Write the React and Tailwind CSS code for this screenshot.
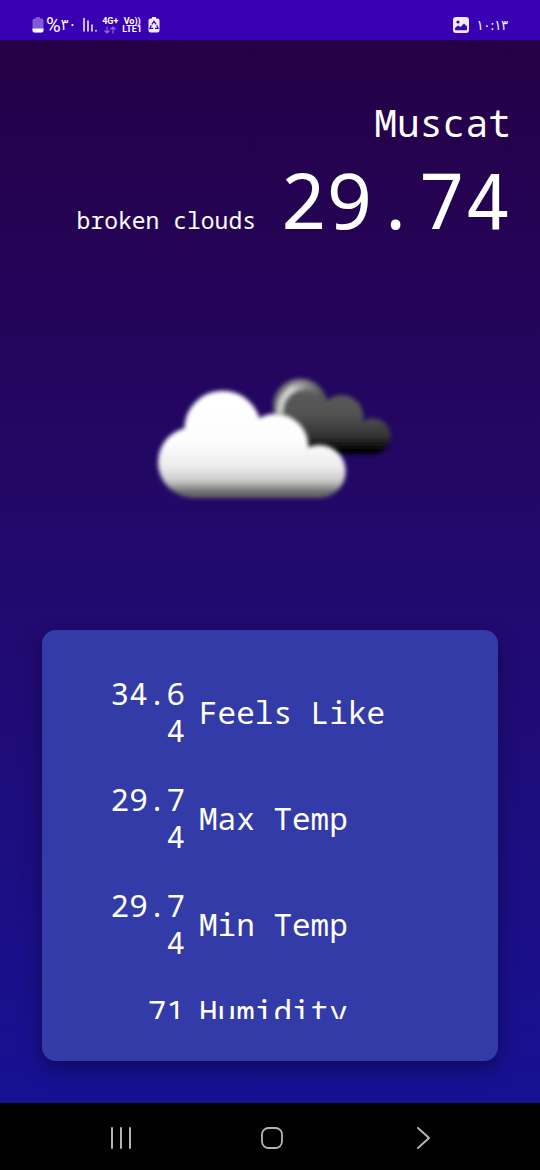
const readings = [
  { label: 'Feels Like', value: '34.64' },
  { label: 'Max Temp', value: '29.74' },
  { label: 'Min Temp', value: '29.74' },
  { label: 'Humidity', value: '71' },
];

function BatteryIcon() {
  return (
    <svg viewBox="0 0 12 18" className="h-[18px] w-3" aria-hidden="true">
      <path d="M4 1h4v1.5h1.5Q11.500 2.500 11.500 4.500V14.500Q11.500 16.500 9.500 16.500h-7Q.5 16.500 .5 14.500V4.500Q.5 2.500 2.500 2.500H4z" fill="#8059d3" />
      <path d="M.5 12.500h11v2q0 2-2 2h-7q-2 0-2-2z" fill="#fff" />
    </svg>
  );
}

function SignalIcon() {
  return (
    <svg viewBox="0 0 16 16" className="h-4 w-4" fill="none" stroke="#eee6fc" strokeWidth="1.6" strokeLinecap="round" aria-hidden="true">
      <path d="M2 1.500v12.500M6 4v10M10 8v6M14 13.500v.5" />
    </svg>
  );
}

function DataArrows() {
  return (
    <svg viewBox="0 0 12 8" className="h-2 w-3" fill="none" stroke="#8c68da" strokeWidth="1.200" aria-hidden="true">
      <path d="M3 .5v6.500M.5 4.500 3 7l2.500-2.500M9 7.500V1M6.500 3.500 9 1l2.500 2.500" />
    </svg>
  );
}

function RecycleBatteryIcon() {
  return (
    <svg viewBox="0 0 12 18" className="h-[18px] w-3" aria-hidden="true">
      <path d="M4 1h4v1.500h1.500q2 0 2 2v10q0 2-2 2h-7q-2 0-2-2v-10q0-2 2-2H4z" fill="#f1eafd" />
      <path d="M3.900 8.300 6 5.400l2.100 2.900M8.700 9.300l1.300 3H7M5.200 12.300H2l1.300-3" fill="none" stroke="#3a08b0" strokeWidth="1.300" />
    </svg>
  );
}

function GalleryIcon() {
  return (
    <svg viewBox="0 0 16 16" className="h-4 w-4" aria-hidden="true">
      <rect width="16" height="16" rx="3" fill="#f1eafd" />
      <circle cx="5" cy="5" r="1.600" fill="#3a08b0" />
      <path d="M2 12.500V11l3-2.500 2.500 1.500L11 6.500l3 3v3q0 .8-.8.8H2.800q-.8 0-.8-.8z" fill="#3a08b0" />
    </svg>
  );
}

function BrokenClouds() {
  return (
    <svg viewBox="-30 0 840 480" className="h-40 w-[280px]" role="img" aria-label="broken clouds">
      <defs>
        <linearGradient id="day" gradientUnits="userSpaceOnUse" x1="0" y1="90" x2="0" y2="414">
          <stop offset="0" stopColor="#fff" />
          <stop offset=".48" stopColor="#fdfdfd" />
          <stop offset=".7" stopColor="#ededed" />
          <stop offset=".83" stopColor="#cecece" />
          <stop offset=".89" stopColor="#a2a2a2" />
          <stop offset=".94" stopColor="#6c6c6c" />
          <stop offset="1" stopColor="#666" />
        </linearGradient>
        <linearGradient id="night" gradientUnits="userSpaceOnUse" x1="0" y1="90" x2="0" y2="284">
          <stop offset="0" stopColor="#5c5c5c" />
          <stop offset=".4" stopColor="#515151" />
          <stop offset=".7" stopColor="#343434" />
          <stop offset=".92" stopColor="#050505" />
          <stop offset="1" stopColor="#000" />
        </linearGradient>
        <linearGradient id="rim" gradientUnits="userSpaceOnUse" x1="400" y1="60" x2="550" y2="100">
          <stop offset="0" stopColor="#6a6a6a" />
          <stop offset=".5" stopColor="#858585" />
          <stop offset="1" stopColor="#565656" />
        </linearGradient>
        <linearGradient id="shine" gradientUnits="userSpaceOnUse" x1="410" y1="150" x2="535" y2="85">
          <stop offset="0" stopColor="#ccc" />
          <stop offset=".5" stopColor="#d8d8d8" />
          <stop offset="1" stopColor="#888" stopOpacity="0" />
        </linearGradient>
        <filter id="soft" x="-10%" y="-10%" width="120%" height="120%">
          <feGaussianBlur stdDeviation="7" />
        </filter>
      </defs>
      <g filter="url(#soft)">
        <circle cx="481" cy="138" r="82" fill="url(#rim)" />
        <g fill="url(#night)">
          <circle cx="492" cy="162" r="72" />
          <circle cx="605" cy="170" r="65" />
          <circle cx="698" cy="229" r="54" />
          <path d="M480 100h68l40 60 90 40 20 83H480z" />
        </g>
        <path d="M421 160C416 116 450 82 484 79S521 85 535 97" fill="none" stroke="url(#shine)" strokeWidth="18" />
      </g>
      <g filter="url(#soft)" fill="url(#day)">
        <circle cx="160" cy="307" r="106" />
        <circle cx="248" cy="207" r="115" />
        <circle cx="407" cy="259" r="98" />
        <circle cx="538" cy="334" r="79" />
        <path d="M158 220h260l122 80v113H158z" />
      </g>
    </svg>
  );
}

export default function App() {
  return (
    <div className="flex h-screen flex-col font-['Noto_Sans_Mono','DejaVu_Sans_Mono',monospace] text-white">
      <header className="flex h-10 shrink-0 items-center justify-between bg-[#3900b3] pt-2.5 pr-8 pl-8 font-['DejaVu_Sans_Condensed','DejaVu_Sans',sans-serif]">
        <div className="flex items-center">
          <BatteryIcon />
          <span className="ml-0.5 flex items-center text-base leading-4">
            <span className="font-['Roboto',sans-serif] text-xl leading-4">%</span>
            <span>٣٠</span>
          </span>
          <span className="ml-1.5 flex"><SignalIcon /></span>
          <span className="ml-1 flex flex-col items-center font-['Roboto',sans-serif] text-[9px] leading-[9px] font-bold">
            4G+
            <DataArrows />
          </span>
          <span className="ml-1 flex flex-col items-center font-['Roboto',sans-serif] text-[9px] leading-2 font-bold">
            <span>Vo))</span>
            <span>LTE1</span>
          </span>
          <span className="ml-1.5 flex"><RecycleBatteryIcon /></span>
        </div>
        <div className="flex items-center gap-2">
          <GalleryIcon />
          <time className="text-sm leading-4">١٠:١٣</time>
        </div>
      </header>

      <main className="flex min-h-0 flex-1 flex-col bg-linear-to-b from-[#250047] to-[#151194]">
        <section className="flex flex-col items-end px-[29px] pt-[58px] text-right">
          <h1 className="text-[38px] leading-12">Muscat</h1>
          <div className="flex items-baseline gap-6">
            <p className="text-[23px]">broken clouds</p>
            <p className="text-[77px] leading-[108px]">29.74</p>
          </div>
        </section>

        <div className="flex justify-center pt-[106px] pb-[110px]">
          <BrokenClouds />
        </div>

        <section className="mx-[42px] mb-[42px] flex min-h-0 flex-1 flex-col rounded-[14px] bg-[#323ba8] px-[42px] pt-[30px] pb-[42px] shadow-[0_8px_20px_rgba(0,0,0,0.35)]">
          <dl className="flex min-h-0 flex-1 flex-col gap-8 overflow-hidden pt-[15px] text-[31px] leading-[37px]">
            {readings.map(({ label, value }) => (
              <div key={label} className="flex shrink-0 flex-row-reverse items-center justify-end gap-3.5">
                <dt>{label}</dt>
                <dd className="ml-5 w-[81px] text-right break-all">{value}</dd>
              </div>
            ))}
          </dl>
        </section>
      </main>

      <nav className="flex h-[67px] shrink-0 items-center justify-around bg-black pt-0.5 pr-[42px] pl-[46px]" aria-label="System navigation">
        <button type="button" aria-label="Recent apps" className="p-2">
          <svg viewBox="0 0 24 24" className="size-6" fill="none" stroke="#b4b4b4" strokeWidth="2" strokeLinecap="round">
            <path d="M3 2v20M12 2v20M21 2v20" />
          </svg>
        </button>
        <button type="button" aria-label="Home" className="p-2">
          <svg viewBox="0 0 24 24" className="size-6" fill="none" stroke="#b4b4b4" strokeWidth="1.800">
            <rect x="2" y="2" width="20" height="20" rx="6.500" />
          </svg>
        </button>
        <button type="button" aria-label="Back" className="p-2">
          <svg viewBox="0 0 24 24" className="size-6" fill="none" stroke="#b4b4b4" strokeWidth="2" strokeLinecap="round" strokeLinejoin="round">
            <path d="m7 2 11 10L7 22" />
          </svg>
        </button>
      </nav>
    </div>
  );
}
